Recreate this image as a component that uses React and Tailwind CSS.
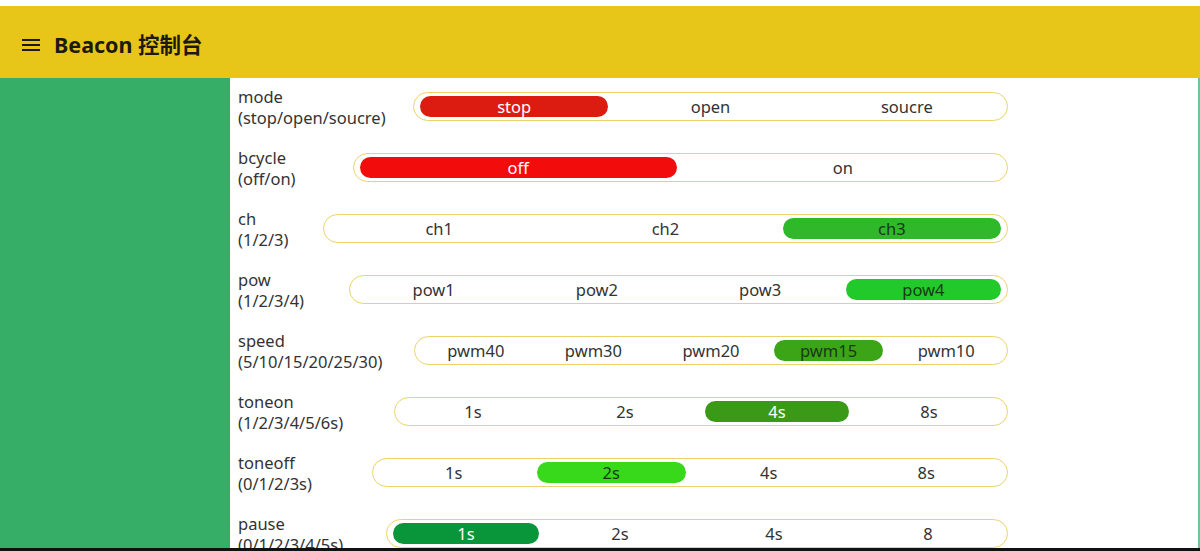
import React from "react";

const rows = [
  { name: "mode", hint: "(stop/open/soucre)", width: 595, options: ["stop", "open", "soucre"], active: 0, color: "bg-[#dc1c10] text-white" },
  { name: "bcycle", hint: "(off/on)", width: 655, options: ["off", "on"], active: 0, color: "bg-[#f20c0c] text-white" },
  { name: "ch", hint: "(1/2/3)", width: 685, options: ["ch1", "ch2", "ch3"], active: 2, color: "bg-[#2fb82a] text-[#17381a]" },
  { name: "pow", hint: "(1/2/3/4)", width: 659, options: ["pow1", "pow2", "pow3", "pow4"], active: 3, color: "bg-[#22c92a] text-[#17381a]" },
  { name: "speed", hint: "(5/10/15/20/25/30)", width: 594, options: ["pwm40", "pwm30", "pwm20", "pwm15", "pwm10"], active: 3, color: "bg-[#3ba517] text-[#17381a]" },
  { name: "toneon", hint: "(1/2/3/4/5/6s)", width: 614, options: ["1s", "2s", "4s", "8s"], active: 2, color: "bg-[#3a9a17] text-white" },
  { name: "toneoff", hint: "(0/1/2/3s)", width: 636, options: ["1s", "2s", "4s", "8s"], active: 1, color: "bg-[#37d91a] text-[#17381a]" },
  { name: "pause", hint: "(0/1/2/3/4/5s)", width: 622, options: ["1s", "2s", "4s", "8"], active: 0, color: "bg-[#09953a] text-white" },
];

// segmented switch, one option lit
const Segments = ({ width, options, active, color }) => (
  <div
    className="ml-auto mt-[6px] h-[29px] rounded-full border-[1.5px] border-[#ecd26a] flex items-center px-[2px]"
    style={{ width }}
  >
    {options.map((opt, i) => (
      <div key={opt} className="flex-1 px-[4px]">
        <div
          className={
            i === active
              ? `h-[21px] pb-[1px] rounded-full flex items-center justify-center ${color}`
              : "h-[21px] pb-[1px] flex items-center justify-center text-[#333]"
          }
        >
          {opt}
        </div>
      </div>
    ))}
  </div>
);

export default function App() {
  return (
    <div
      className="h-[551px] w-full overflow-hidden flex flex-col bg-white"
      style={{ fontFamily: '"Noto Sans", "Noto Sans CJK SC", sans-serif' }}
    >
      {/* Header */}
      <div className="mt-[6px] h-[72px] shrink-0 bg-[#e8c619] flex items-center pt-[6px] pl-[22px] gap-[14px] text-[#1c1a10]">
        <svg width="18" height="14" viewBox="0 0 18 14">
          <rect x="0" y="1" width="18" height="2" fill="currentColor" />
          <rect x="0" y="6" width="18" height="2" fill="currentColor" />
          <rect x="0" y="11" width="18" height="2" fill="currentColor" />
        </svg>
        <span className="text-[21.5px] font-bold">Beacon 控制台</span>
      </div>

      <div className="flex flex-1 min-h-0">
        <div className="w-[230px] shrink-0 bg-[#36ae67]" />
        <div className="flex-1 min-h-0 overflow-hidden border-r-2 border-[#6cc796]">
          <div className="w-[778px] pl-[8px] pt-[8px] flex flex-col gap-[19px] text-[16.5px] leading-[21px] text-[#333]">
            {rows.map((r) => (
              <div key={r.name} className="flex items-start">
                <div className="shrink-0">
                  <div>{r.name}</div>
                  <div>{r.hint}</div>
                </div>
                <Segments {...r} />
              </div>
            ))}
          </div>
        </div>
      </div>

      <div className="h-[3px] shrink-0 bg-[#111]" />
    </div>
  );
}
